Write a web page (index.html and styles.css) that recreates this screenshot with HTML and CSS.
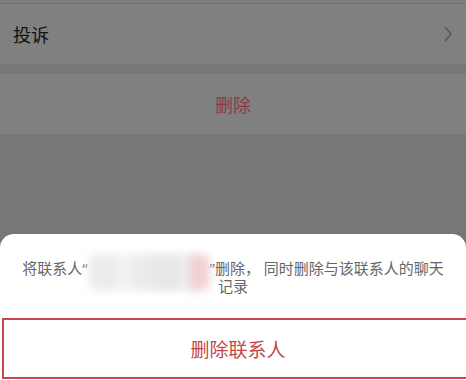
FILE: index.html
```html
<!DOCTYPE html>
<html lang="zh-CN">
<head>
  <meta charset="UTF-8">
  <meta name="viewport" content="width=device-width, initial-scale=1.0">
  <title>删除联系人</title>
  <link rel="stylesheet" href="styles.css">
</head>
<body>

  <div class="page">
    <div class="top-strip"></div>

    <div class="cell">
      <span class="cell-label">投诉</span>
      <svg class="chevron" width="10" height="16" viewBox="0 0 10 16">
        <polyline points="2,1 8,8 2,15" fill="none" stroke="#555" stroke-width="1.4"/>
      </svg>
    </div>

    <div class="cell cell-danger">删除</div>
  </div>

  <!-- action sheet -->
  <div class="sheet">
    <p class="sheet-tip">
      将联系人“<span class="redacted">某某某某某某某某</span>”删除， 同时删除与该联系人的聊天<br>记录
    </p>
    <button class="sheet-btn">删除联系人</button>
  </div>

</body>
</html>
```

FILE: styles.css
```css
* {
  box-sizing: border-box;
  margin: 0;
  padding: 0;
}

html, body {
  height: 100%;
}

body {
  font-family: 'Noto Sans CJK SC', 'Noto Sans', sans-serif;
  background: #777;
  display: flex;
  flex-direction: column;
  overflow: hidden;
}

.page {
  flex: 1;
}

.top-strip {
  height: 4px;
  background: #7f7f7f;
  border-bottom: 1px solid #747474;
}

.cell {
  height: 60px;
  background: #808080;
  display: flex;
  align-items: center;
  padding: 0 13px 0 13px;
  font-size: 18px;
  color: #111;
}

.cell-label {
  flex: 1;
}

.chevron {
  display: block;
}

.cell-danger {
  margin-top: 10px;
  justify-content: center;
  color: #8b3a3f;
}

.sheet {
  height: 146px;
  background: #fff;
  border-radius: 14px 14px 0 0;
  padding-top: 25px;
  overflow: hidden;
}

.sheet-tip {
  font-family: 'Noto Sans', 'Noto Sans CJK SC', sans-serif;
  font-size: 15px;
  line-height: 18px;
  color: #666;
  text-align: center;
  white-space: nowrap;
}

.redacted {
  position: relative;
  display: inline-block;
  width: 122px;
  color: transparent;
  vertical-align: top;
}

.redacted::after {
  content: '';
  position: absolute;
  left: 0;
  right: 0;
  top: -5px;
  bottom: -14px;
  background: linear-gradient(to right, #eee 0%, #ebebeb 20%, #f4f4f4 28%, #ececec 40%, #e6e6e6 70%, #f1f1f1 82%, #f0cfd0 84%, #f2d6d7 100%);
  filter: blur(4px);
  border-radius: 8px;
}

.sheet-btn {
  display: block;
  width: calc(100% + 6px);
  height: 61px;
  margin: 23px 0 0 2px;
  background: #fff;
  border: 2px solid #c9474c;
  color: #c4464b;
  font-family: inherit;
  font-size: 19px;
}
```
